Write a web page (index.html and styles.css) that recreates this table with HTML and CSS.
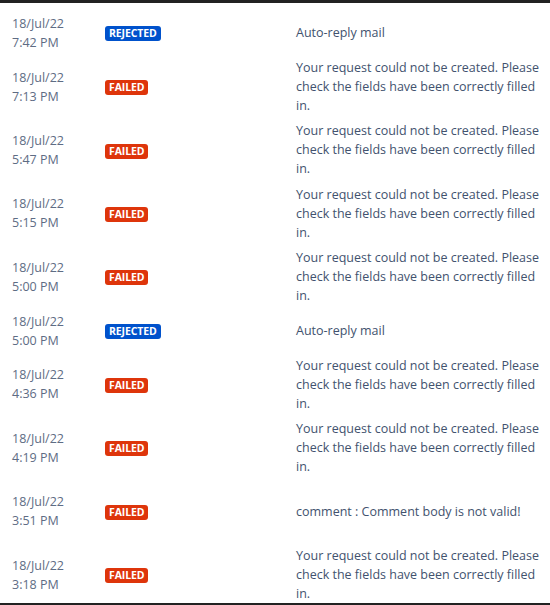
FILE: index.html
```html
<!DOCTYPE html>
<html lang="en">
<head>
    <meta charset="UTF-8">
    <meta name="viewport" content="width=device-width, initial-scale=1.0">
    <title>Mail Log</title>
    <link rel="stylesheet" href="styles.css">
</head>
<body>
    <div class="topbar"></div>
    <div class="log-list">
        <div class="log-row">
            <div class="log-date">18/Jul/22<br>7:42 PM</div>
            <div><span class="lozenge rejected">Rejected</span></div>
            <div class="log-message">Auto-reply mail</div>
        </div>
        <div class="log-row">
            <div class="log-date">18/Jul/22<br>7:13 PM</div>
            <div><span class="lozenge failed">Failed</span></div>
            <div class="log-message">Your request could not be created. Please check the fields have been correctly filled in.</div>
        </div>
        <div class="log-row">
            <div class="log-date">18/Jul/22<br>5:47 PM</div>
            <div><span class="lozenge failed">Failed</span></div>
            <div class="log-message">Your request could not be created. Please check the fields have been correctly filled in.</div>
        </div>
        <div class="log-row">
            <div class="log-date">18/Jul/22<br>5:15 PM</div>
            <div><span class="lozenge failed">Failed</span></div>
            <div class="log-message">Your request could not be created. Please check the fields have been correctly filled in.</div>
        </div>
        <div class="log-row">
            <div class="log-date">18/Jul/22<br>5:00 PM</div>
            <div><span class="lozenge failed">Failed</span></div>
            <div class="log-message">Your request could not be created. Please check the fields have been correctly filled in.</div>
        </div>
        <div class="log-row">
            <div class="log-date">18/Jul/22<br>5:00 PM</div>
            <div><span class="lozenge rejected">Rejected</span></div>
            <div class="log-message">Auto-reply mail</div>
        </div>
        <div class="log-row">
            <div class="log-date">18/Jul/22<br>4:36 PM</div>
            <div><span class="lozenge failed">Failed</span></div>
            <div class="log-message">Your request could not be created. Please check the fields have been correctly filled in.</div>
        </div>
        <div class="log-row">
            <div class="log-date">18/Jul/22<br>4:19 PM</div>
            <div><span class="lozenge failed">Failed</span></div>
            <div class="log-message">Your request could not be created. Please check the fields have been correctly filled in.</div>
        </div>
        <div class="log-row tall">
            <div class="log-date">18/Jul/22<br>3:51 PM</div>
            <div><span class="lozenge failed">Failed</span></div>
            <div class="log-message">comment : Comment body is not valid!</div>
        </div>
        <div class="log-row">
            <div class="log-date">18/Jul/22<br>3:18 PM</div>
            <div><span class="lozenge failed">Failed</span></div>
            <div class="log-message">Your request could not be created. Please check the fields have been correctly filled in.</div>
        </div>
    </div>
    <div class="bottom-line"></div>
</body>
</html>
```

FILE: styles.css
```css
html, body {
    margin: 0;
    padding: 0;
    height: 100%;
}
body {
    font-family: "Open Sans", "Noto Sans", sans-serif;
    font-size: 12.5px;
    line-height: 19px;
    background-color: #fff;
    display: flex;
    flex-direction: column;
    overflow: hidden;
}
.topbar {
    height: 3px;
    background-color: #222;
    flex-shrink: 0;
}
.log-list {
    flex: 1;
    padding: 7.5px 0 0 12px;
    overflow: hidden;
}
.log-row {
    display: grid;
    grid-template-columns: 93px 191px 250px;
    align-items: center;
    padding: 3.2px 0;
}
.log-row.tall {
    min-height: 57px;
}
.log-date {
    color: #5e6c84;
}
.log-message {
    color: #42526e;
}
.lozenge {
    display: inline-block;
    padding: 0 4px;
    border-radius: 3px;
    color: #fff;
    font-size: 10.5px;
    font-weight: 700;
    line-height: 15px;
    text-transform: uppercase;
    letter-spacing: -0.1px;
    vertical-align: middle;
}
.lozenge.rejected {
    background-color: #0052cc;
}
.lozenge.failed {
    background-color: #de350b;
}
.bottom-line {
    height: 2px;
    background-color: #222;
    flex-shrink: 0;
}
```
